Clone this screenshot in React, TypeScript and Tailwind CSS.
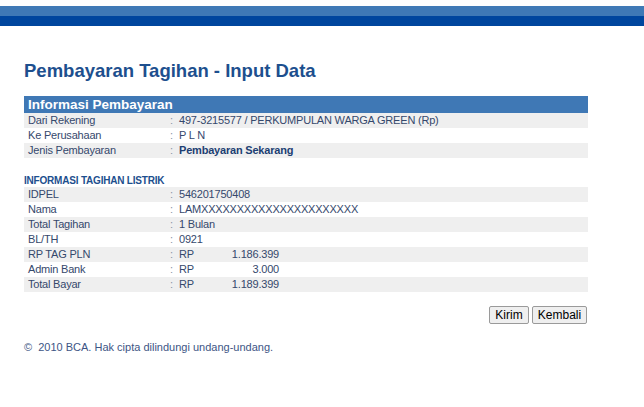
import React from 'react';

const payRows = [
  { label: 'Dari Rekening', value: '497-3215577 / PERKUMPULAN WARGA GREEN (Rp)' },
  { label: 'Ke Perusahaan', value: 'P L N' },
  { label: 'Jenis Pembayaran', value: 'Pembayaran Sekarang', bold: true },
];

const billRows: { label: string; value?: string; amount?: string }[] = [
  { label: 'IDPEL', value: '546201750408' },
  { label: 'Nama', value: 'LAMXXXXXXXXXXXXXXXXXXXXXX' },
  { label: 'Total Tagihan', value: '1 Bulan' },
  { label: 'BL/TH', value: '0921' },
  { label: 'RP TAG PLN', amount: '1.186.399' },
  { label: 'Admin Bank', amount: '3.000' },
  { label: 'Total Bayar', amount: '1.189.399' },
];

function Row({ label, index, children }: { label: string; index: number; children: React.ReactNode }) {
  return (
    <div className={`flex h-[15px] items-center ${index % 2 === 0 ? 'bg-[#efefef]' : 'bg-white'}`}>
      <div className="w-[146px] pl-[4px]">{label}</div>
      <div className="w-[9px] text-[#8a94a6]">:</div>
      <div className="flex-1">{children}</div>
    </div>
  );
}

export default function App() {
  return (
    <div className="min-h-[407px] bg-white font-['Liberation_Sans',Arial,sans-serif] text-[#35486c]">
      <div className="pt-[6px]">
        <div className="h-[10px] bg-[#3f79b6]" />
        <div className="h-[10px] bg-[#00469e]" />
      </div>

      <div className="ml-[24px] w-[564px]">
        <h1 className="mt-[34px] text-[18.5px] font-bold leading-[22px] text-[#1d4f8e]">
          Pembayaran Tagihan - Input Data
        </h1>

        <div className="mt-[14px] text-[11px] leading-[15px] tracking-[-0.2px]">
          <div className="flex h-[17px] items-center bg-[#3f78b5] pl-[4px] text-[13.5px] font-bold tracking-normal text-white">
            Informasi Pembayaran
          </div>
          {payRows.map((r, i) => (
            <Row key={r.label} label={r.label} index={i}>
              <span className={r.bold ? 'font-bold text-[#1d3f73]' : ''}>{r.value}</span>
            </Row>
          ))}

          <div className="mt-[16px] h-[13px] text-[10px] font-bold leading-[13px] text-[#1d4f8e]">
            INFORMASI TAGIHAN LISTRIK
          </div>
          {billRows.map((r, i) => (
            <Row key={r.label} label={r.label} index={i}>
              {r.amount ? (
                <div className="flex w-[100px]">
                  <span>RP</span>
                  <span className="ml-auto">{r.amount}</span>
                </div>
              ) : (
                r.value
              )}
            </Row>
          ))}

          <div className="mt-[14px] flex justify-end gap-[3px] pr-[1px] tracking-normal">
            <button className="h-[18px] w-[40px] rounded-[2px] border border-[#9a9a9a] bg-[#efefef] text-[12px] leading-none text-black">
              Kirim
            </button>
            <button className="h-[18px] w-[55px] rounded-[2px] border border-[#9a9a9a] bg-[#efefef] text-[12px] leading-none text-black">
              Kembali
            </button>
          </div>

          <div className="mt-[17px] text-[11px] leading-[13px] tracking-normal text-[#3d5585]">©&nbsp; 2010 BCA. Hak cipta dilindungi undang-undang.</div>
        </div>
      </div>
    </div>
  );
}
